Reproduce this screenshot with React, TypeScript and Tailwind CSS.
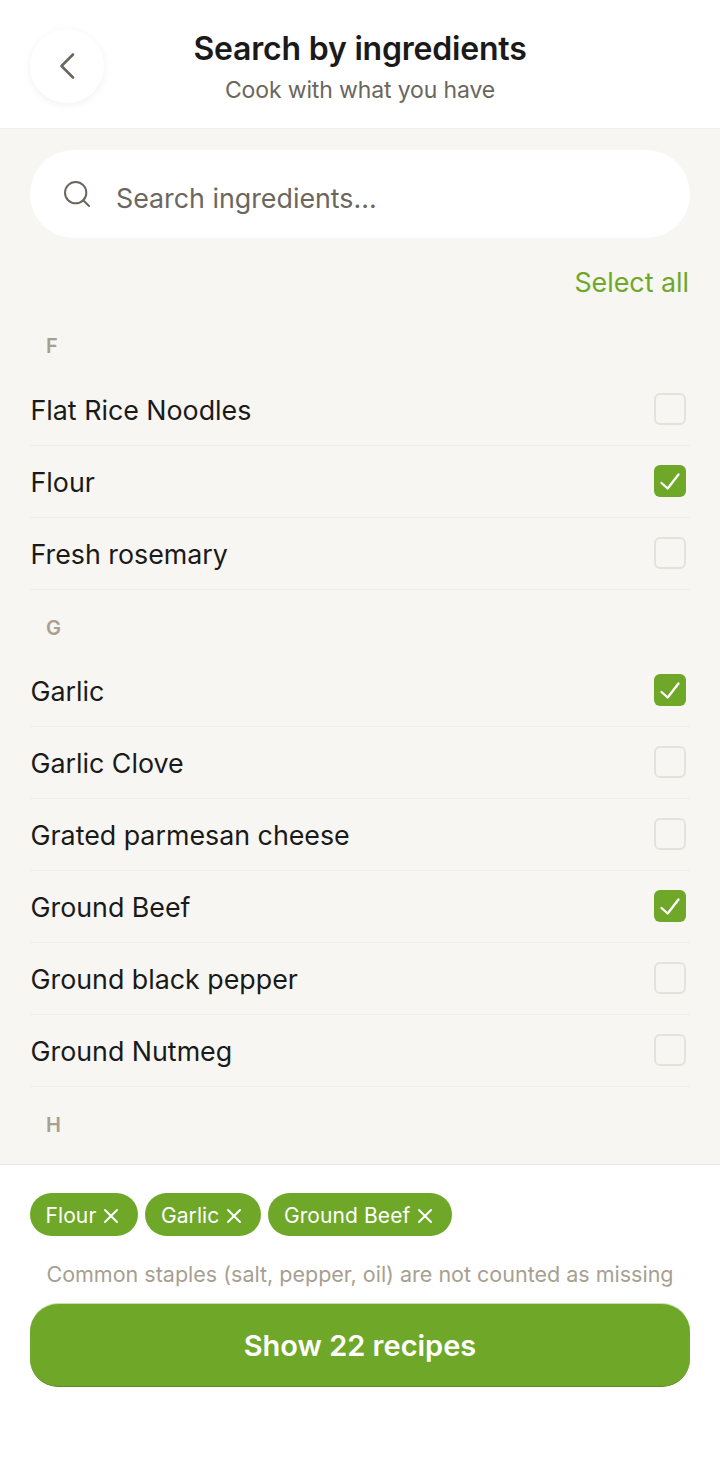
import React from 'react';
import { Search, X } from 'lucide-react';

type Section = { letter: string; items: { name: string; checked?: boolean }[] };

const sections: Section[] = [
  {
    letter: 'F',
    items: [{ name: 'Flat Rice Noodles' }, { name: 'Flour', checked: true }, { name: 'Fresh rosemary' }],
  },
  {
    letter: 'G',
    items: [
      { name: 'Garlic', checked: true },
      { name: 'Garlic Clove' },
      { name: 'Grated parmesan cheese' },
      { name: 'Ground Beef', checked: true },
      { name: 'Ground black pepper' },
      { name: 'Ground Nutmeg' },
    ],
  },
  { letter: 'H', items: [] },
];

const chips = ['Flour', 'Garlic', 'Ground Beef'];

const Row: React.FC<{ name: string; checked?: boolean }> = ({ name, checked }) => (
  <div className="flex items-center justify-between h-[72px] border-b border-[#f0eeea] pr-1">
    <span className="ml-[0.5px] mt-[2px] text-[26.8px] leading-[36px] text-[#1a1a1a]">{name}</span>
    {checked ? (
      <span className="w-8 h-8 rounded-[6px] bg-[#6fa828]">
        <svg viewBox="0 0 32 32" className="w-8 h-8" fill="none" stroke="#fff" strokeWidth={2.3} strokeLinecap="round" strokeLinejoin="round">
          <path d="M7.5 18 13.7 23.5 24.5 9.5" />
        </svg>
      </span>
    ) : (
      <span className="w-8 h-8 rounded-[6px] border-2 border-[#e5e2db]" />
    )}
  </div>
);

export default function App() {
  return (
    <div className="flex flex-col w-[720px] h-[1466px] overflow-hidden bg-[#f7f6f2] font-['Inter',sans-serif]">
      <header className="relative flex flex-col items-center h-[129px] shrink-0 bg-white border-b border-[#f0eeea] pt-[28px]">
        <button className="absolute left-[30px] top-[29px] flex items-center justify-center w-[74px] h-[74px] rounded-full bg-white shadow-[0_2px_8px_rgba(0,0,0,0.06)]">
          <svg viewBox="0 0 18 28" className="w-[18px] h-[28px]" fill="none" stroke="#6b665e" strokeWidth={2.6} strokeLinecap="round" strokeLinejoin="round">
            <path d="M15 2.5 3.5 14 15 25.5" />
          </svg>
        </button>
        <h1 className="text-[32px] leading-[42px] font-semibold tracking-[-0.2px] text-[#1a1a1a]">Search by ingredients</h1>
        <p className="text-[23px] leading-[30px] mt-[5px] tracking-[-0.13px] text-[#6b665e]">Cook with what you have</p>
      </header>

      <main className="flex-1 min-h-0 overflow-hidden px-[30px] pt-[21px]">
        <div className="flex items-center h-[88px] rounded-full bg-white pl-[31px]">
          <Search className="w-[32px] h-[32px] text-[#6b665e]" strokeWidth={1.5} />
          <span className="ml-[23px] mt-[8px] text-[26.8px] leading-[36px] text-[#6b665e]">Search ingredients...</span>
        </div>
        <div className="flex justify-end mt-[26px] h-[36px] pr-px">
          <span className="text-[26.8px] leading-[36px] text-[#6fa828]">Select all</span>
        </div>
        {sections.map((s, i) => (
          <section key={s.letter}>
            <div className={`pl-4 text-[20px] leading-[24px] font-semibold text-[#a89f91] ${i === 0 ? 'pt-[34px] pb-[15.5px]' : 'pt-[26px] pb-[15px]'}`}>
              {s.letter}
            </div>
            {s.items.map((item) => (
              <Row key={item.name} name={item.name} checked={item.checked} />
            ))}
          </section>
        ))}
      </main>

      <footer className="h-[302px] shrink-0 bg-white border-t border-[#e9e7e2] px-[30px] pt-[28px]">
        <div className="flex gap-[7px]">
          {chips.map((c) => (
            <span key={c} className="flex items-center h-[43px] rounded-full bg-[#6fa828] pl-[15.5px] pr-[15px] pt-[2px] text-[21px] leading-[28px] tracking-[0.1px] text-white">
              {c}
              <X className="w-[24px] h-[24px] ml-[3px]" strokeWidth={1.9} />
            </span>
          ))}
        </div>
        <p className="mt-[24px] text-center text-[21.5px] leading-[28px] text-[#a89f91]">
          Common staples (salt, pepper, oil) are not counted as missing
        </p>
        <button className="flex items-center justify-center w-full h-[83px] mt-[16px] pt-[2px] rounded-[28px] bg-[#6fa828] border-b border-[#5a8c1e] shadow-[0_-1px_0_#c9deb0] text-[29px] font-semibold text-white">
          Show 22 recipes
        </button>
      </footer>
    </div>
  );
}
